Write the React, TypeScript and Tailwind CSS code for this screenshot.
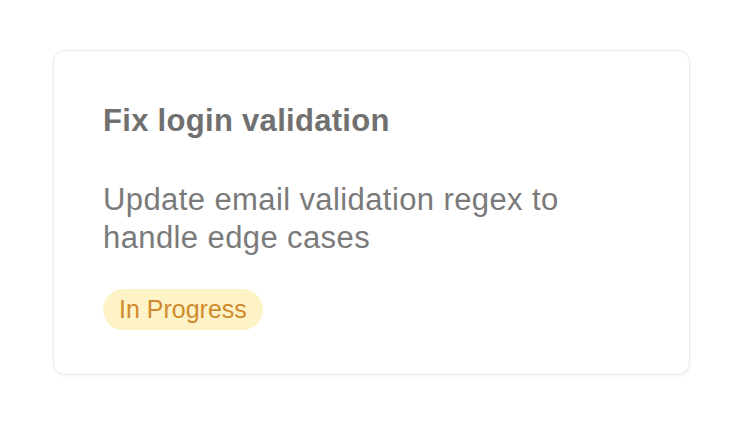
export default function App() {
  return (
    <div className="min-h-screen bg-white pt-[50px] pl-[53px]" style={{ fontFamily: '"Liberation Sans", Arial, sans-serif' }}>
      <div className="w-[637px] h-[325px] rounded-xl border border-[#ebebeb] bg-white px-[49px] pt-[50px] shadow-[0_1px_3px_rgba(0,0,0,0.06)]">
        <h2 className="text-[31px] leading-[40px] tracking-[0.3px] font-bold text-[#707070]">Fix login validation</h2>
        <p className="mt-[40px] text-[31px] leading-[38px] tracking-[0.4px] text-[#7a7a7a]">
          Update email validation regex to
          <br />
          handle edge cases
        </p>
        <span className="mt-[32px] inline-flex h-[41px] items-center rounded-full bg-[#fef3c7] px-[16px] text-[25px] text-[#cf8a2e]">
          In Progress
        </span>
      </div>
    </div>
  );
}
